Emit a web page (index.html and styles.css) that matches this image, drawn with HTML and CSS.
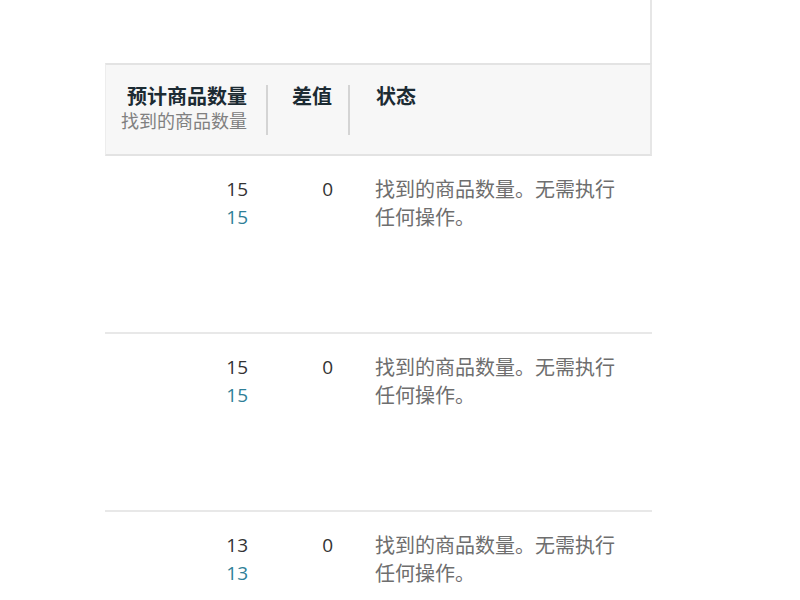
FILE: index.html
```html
<!DOCTYPE html>
<html lang="zh-CN">
<head>
<meta charset="utf-8">
<title>商品数量</title>
<link rel="stylesheet" href="styles.css">
</head>
<body>
<div class="panel">
  <div class="top"></div>
  <div class="thead">
    <div class="th c1">
      <div class="th-title">预计商品数量</div>
      <div class="th-sub">找到的商品数量</div>
    </div>
    <div class="th c2">
      <div class="th-title">差值</div>
    </div>
    <div class="th c3 last">
      <div class="th-title">状态</div>
    </div>
  </div>
  <div class="row">
    <div class="td c1"><div class="num">15</div><div class="num found">15</div></div>
    <div class="td c2"><div class="num">0</div></div>
    <div class="td c3"><div class="status">找到的商品数量。无需执行任何操作。</div></div>
  </div>
  <div class="row">
    <div class="td c1"><div class="num">15</div><div class="num found">15</div></div>
    <div class="td c2"><div class="num">0</div></div>
    <div class="td c3"><div class="status">找到的商品数量。无需执行任何操作。</div></div>
  </div>
  <div class="row">
    <div class="td c1"><div class="num">13</div><div class="num found">13</div></div>
    <div class="td c2"><div class="num">0</div></div>
    <div class="td c3"><div class="status">找到的商品数量。无需执行任何操作。</div></div>
  </div>
</div>
</body>
</html>
```
FILE: styles.css
```css
html, body {
  margin: 0;
  padding: 0;
  background: #ffffff;
}
body {
  font-family: "Open Sans", "Noto Sans CJK SC", sans-serif;
  height: 600px;
  overflow: hidden;
}
.panel {
  margin-left: 105px;
  width: 547px;
}
.top {
  height: 63px;
  border-right: 2px solid #e6e6e6;
}
.thead {
  display: flex;
  align-items: flex-start;
  background: #f7f7f7;
  border-top: 2px solid #e3e3e3;
  border-bottom: 2px solid #e3e3e3;
  border-left: 1px solid #ededed;
  border-right: 2px solid #e6e6e6;
  padding: 20px 0 19px;
}
.th {
  box-sizing: border-box;
  height: 50px;
  border-right: 2px solid #d4d4d4;
}
.th.last {
  border-right: none;
}
.c1 {
  width: 162px;
  text-align: right;
  padding-right: 19px;
  box-sizing: border-box;
}
.c2 {
  width: 82px;
  text-align: right;
  padding-right: 16px;
  box-sizing: border-box;
}
.c3 {
  flex: 1;
  padding-left: 26px;
  padding-right: 26px;
  box-sizing: border-box;
}
.th-title {
  font-family: "Noto Sans CJK SC", sans-serif;
  font-weight: 700;
  font-size: 20px;
  line-height: 22px;
  color: #1c2b33;
}
.th-sub {
  font-family: "Noto Sans CJK SC", sans-serif;
  font-size: 18px;
  line-height: 26px;
  color: #808080;
}
.row {
  display: flex;
  align-items: flex-start;
  box-sizing: border-box;
  height: 178px;
  padding-top: 19px;
  border-bottom: 2px solid #e8e8e8;
}
.num {
  font-size: 19px;
  line-height: 28px;
  color: #333333;
}
.num.found {
  color: #2f7f98;
}
.status {
  font-family: "Noto Sans CJK SC", sans-serif;
  font-size: 20px;
  line-height: 28px;
  color: #6e6e6e;
}
```
